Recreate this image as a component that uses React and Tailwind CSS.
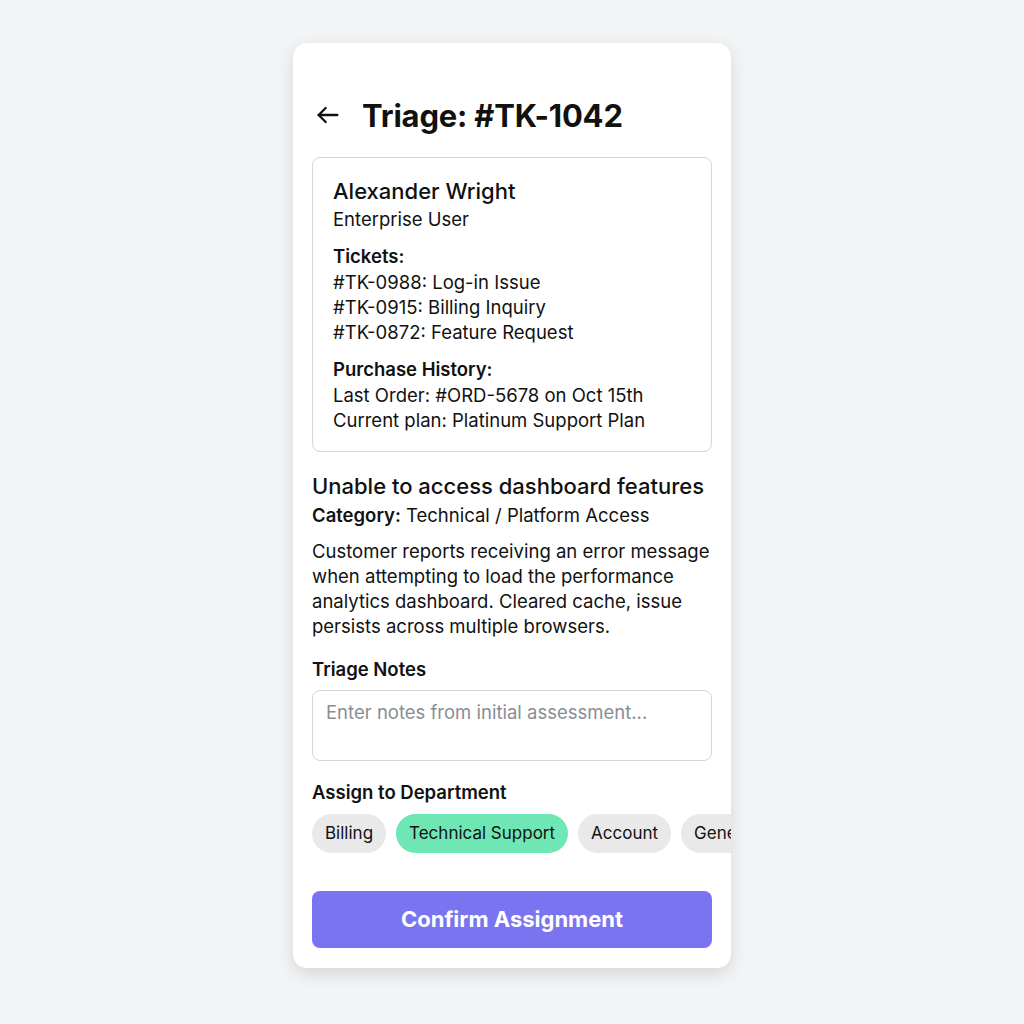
import React from "react";

const chips = [
  { label: "Billing", active: false },
  { label: "Technical Support", active: true },
  { label: "Account", active: false },
  { label: "General", active: false },
];

export default function App() {
  return (
    <div
      className="min-h-screen w-full bg-[#f3f4f6] flex justify-center pt-[43px]"
      style={{ fontFamily: "Inter, 'Noto Sans', sans-serif" }}
    >
      <div className="w-[438px] h-[925px] bg-white rounded-[14px] shadow-[0_6px_18px_rgba(0,0,0,0.12)] overflow-hidden px-[19px] pt-[52px] text-[#111]">
        {/* header */}
        <div className="flex items-center gap-[20px] h-[40px]">
          <svg width="28" height="28" viewBox="0 0 24 24" fill="none" stroke="#111" strokeWidth="2" strokeLinecap="round" strokeLinejoin="round" className="ml-[2px]">
            <path d="M20 12H4" />
            <path d="M10 6l-6 6 6 6" />
          </svg>
          <h1 className="text-[31px] font-bold tracking-[-0.2px] leading-none">Triage: #TK-1042</h1>
        </div>

        {/* customer card */}
        <div className="mt-[22px] border border-[#d4d6da] rounded-[8px] px-[20px] pt-[19px] pb-[18px] text-[18.5px] leading-[25px]">
          <div className="text-[22px] leading-[28px] font-medium">Alexander Wright</div>
          <div className="mt-[2px]">Enterprise User</div>
          <div className="mt-[11px] font-semibold leading-[27px]">Tickets:</div>
          <div>#TK-0988: Log-in Issue</div>
          <div>#TK-0915: Billing Inquiry</div>
          <div>#TK-0872: Feature Request</div>
          <div className="mt-[11px] font-semibold leading-[27px]">Purchase History:</div>
          <div>Last Order: #ORD-5678 on Oct 15th</div>
          <div>Current plan: Platinum Support Plan</div>
        </div>

        {/* issue */}
        <div className="mt-[20px] text-[22px] leading-[28px] font-medium">Unable to access dashboard features</div>
        <div className="text-[18.5px] leading-[25px] mt-[3px]">
          <span className="font-semibold">Category:</span> Technical / Platform Access
        </div>
        <p className="mt-[11px] text-[18.5px] leading-[25px]">
          Customer reports receiving an error message when attempting to load the performance analytics dashboard. Cleared cache, issue persists across multiple browsers.
        </p>

        {/* notes */}
        <div className="mt-[18px] text-[18.5px] leading-[25px] font-semibold">Triage Notes</div>
        <div className="mt-[8px] h-[71px] border border-[#d4d6da] rounded-[8px] px-[13px] pt-[9px] text-[18.5px] leading-[25px] text-[#8a8d93]">
          Enter notes from initial assessment...
        </div>

        {/* departments */}
        <div className="mt-[19px] text-[18.5px] leading-[25px] font-semibold">Assign to Department</div>
        <div className="mt-[9px] flex gap-[10px] whitespace-nowrap">
          {chips.map((c) => (
            <div
              key={c.label}
              className={
                c.active
                  ? "h-[39px] px-[13px] rounded-full bg-[#6ee7b5] flex items-center text-[17px] shrink-0"
                  : "h-[39px] px-[13px] rounded-full bg-[#e9e9ea] flex items-center text-[17px] shrink-0"
              }
            >
              {c.label}
            </div>
          ))}
        </div>

        <button className="mt-[38px] w-full h-[57px] rounded-[8px] bg-[#7b74f1] text-white text-[22px] font-bold">
          Confirm Assignment
        </button>
      </div>
    </div>
  );
}
